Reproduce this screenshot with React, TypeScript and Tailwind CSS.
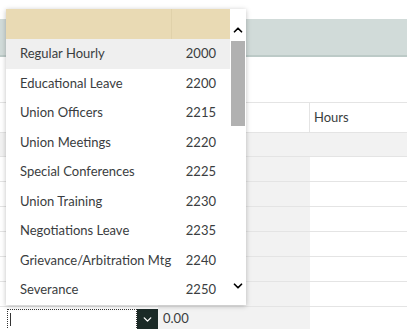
import { ChevronDown, ChevronUp } from 'lucide-react';

const items = [
  { label: 'Regular Hourly', code: '2000' },
  { label: 'Educational Leave', code: '2200' },
  { label: 'Union Officers', code: '2215' },
  { label: 'Union Meetings', code: '2220' },
  { label: 'Special Conferences', code: '2225' },
  { label: 'Union Training', code: '2230' },
  { label: 'Negotiations Leave', code: '2235' },
  { label: 'Grievance/Arbitration Mtg', code: '2240' },
  { label: 'Severance', code: '2250' },
];

function TableRow() {
  return (
    <div className="flex h-[25px] border-b border-[#e4e4e4]">
      <div className="w-[158px] bg-white" />
      <div className="w-[152px] bg-[#f2f2f2]" />
      <div className="flex-1 bg-white" />
    </div>
  );
}

export default function App() {
  return (
    <div
      className="relative w-[407px] h-[329px] overflow-hidden bg-white text-[#3a3d40]"
      style={{ fontFamily: 'Lato, "Open Sans", sans-serif' }}
    >
      {/* ── Page behind the popup ── */}
      <div className="h-[19px]" />
      <div className="h-[38px] bg-[#d1dbd9] border-b-2 border-[#bccac7]" />
      <div className="h-[45px]" />

      {/* table header */}
      <div className="flex h-[31px] border-y border-[#e4e4e4] text-[13px]">
        <div className="w-[310px] border-r border-[#e4e4e4]" />
        <div className="flex-1 flex items-center pl-[4px]">Hours</div>
      </div>
      <div className="h-[24px] bg-[#f2f2f2] border-b border-[#e4e4e4]" />
      <TableRow />
      <TableRow />
      <TableRow />
      <TableRow />
      <TableRow />
      <TableRow />

      {/* input row */}
      <div className="flex h-[24px]">
        <div className="w-[158px] flex items-center pl-[7px]">
          <div className="flex-1 h-[21px] border border-dotted border-[#333] bg-white flex items-center">
            <span className="ml-[2px] w-px h-[13px] bg-[#333]" />
          </div>
          <div className="w-[21px] h-[21px] bg-[#1b2a27] flex items-center justify-center">
            <ChevronDown size={13} strokeWidth={2.5} className="text-white" />
          </div>
        </div>
        <div className="w-[152px] bg-[#f2f2f2] flex items-center pl-[5px] text-[13px]">0.00</div>
        <div className="flex-1" />
      </div>

      {/* ── Dropdown popup ── */}
      <div className="absolute left-[6px] top-[9px] w-[240px] h-[296px] bg-white flex shadow-[0_1px_5px_rgba(0,0,0,0.25)]">
        <div className="flex-1 flex flex-col">
          <div className="h-[30px] flex bg-[#e9dab4]">
            <div className="w-[166px] border-r border-[#e0d1aa]" />
            <div className="flex-1" />
          </div>
          {items.map((it, i) => (
            <div
              key={it.code}
              className={`h-[29.5px] flex items-center pl-[14px] pr-[14px] text-[13px] ${i === 0 ? 'bg-[#efefef]' : ''}`}
            >
              <span className="flex-1">{it.label}</span>
              <span>{it.code}</span>
            </div>
          ))}
        </div>
        {/* scrollbar */}
        <div className="w-[16px] flex flex-col items-center">
          <div className="h-[32px] flex items-end justify-center pb-[4px]">
            <ChevronUp size={14} strokeWidth={3} className="text-black" />
          </div>
          <div className="w-[14px] h-[85px] bg-[#b1b1b1]" />
          <div className="flex-1" />
          <div className="h-[26px] flex items-start justify-center">
            <ChevronDown size={14} strokeWidth={3} className="text-black" />
          </div>
        </div>
      </div>
    </div>
  );
}
